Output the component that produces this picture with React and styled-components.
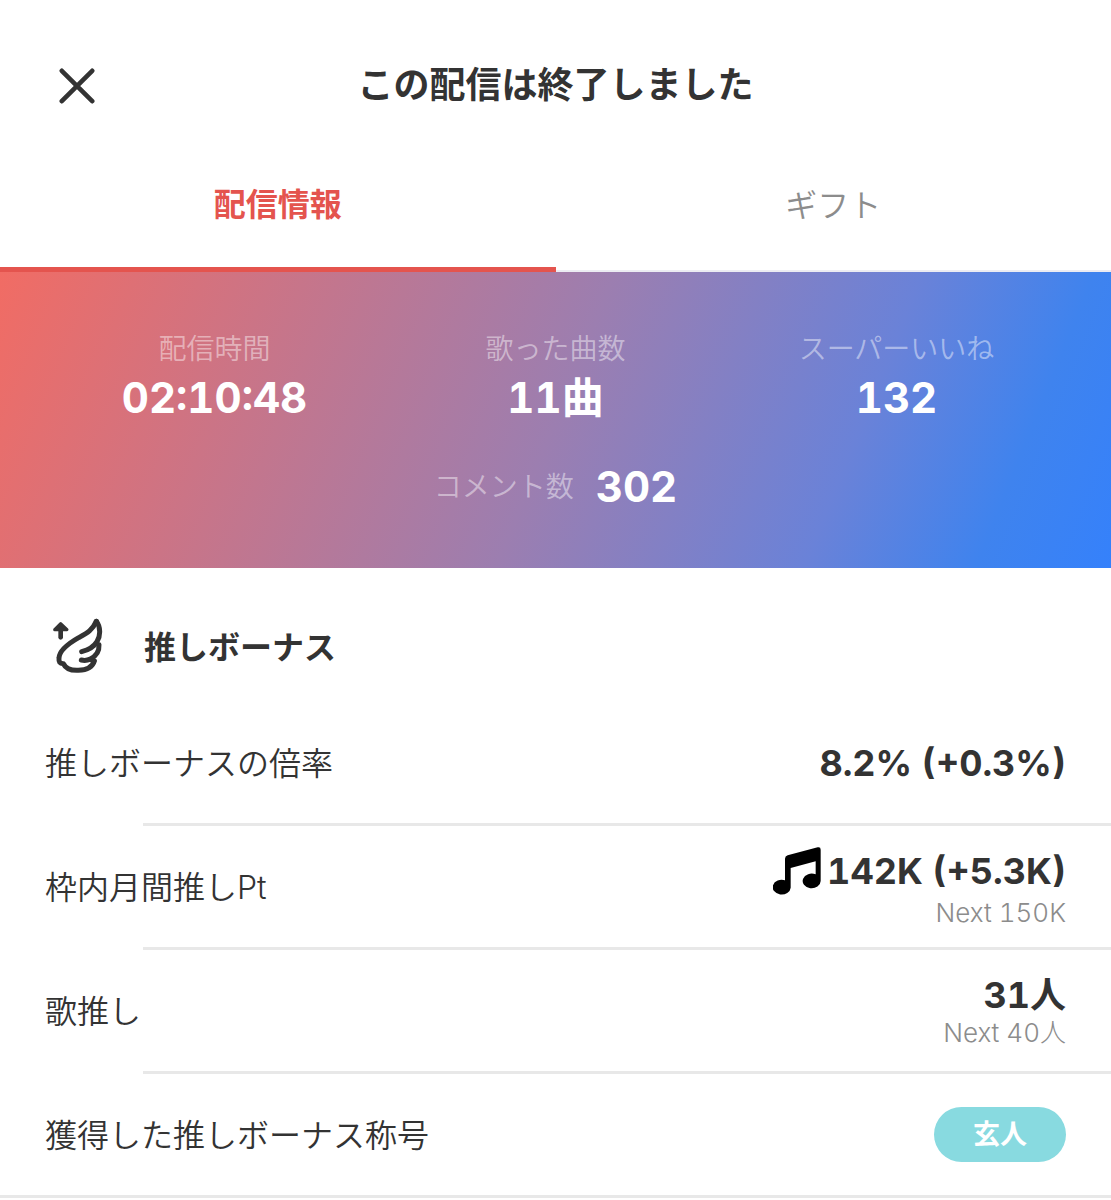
import React, { useState } from 'react'
import styled, { createGlobalStyle } from 'styled-components'

const GlobalStyle = createGlobalStyle`
  * {
    box-sizing: border-box;
  }

  body {
    margin: 0;
    background: #fff;
    color: #333;
    font-family: Inter, 'Noto Sans CJK JP', sans-serif;
    font-variant-numeric: tabular-nums;
  }
`

const Header = styled.header`
  display: grid;
  grid-template-columns: 64px 1fr 64px;
  align-items: center;
  padding: 56px 45px 0;
`

const CloseButton = styled.button`
  display: flex;
  justify-content: center;
  align-items: center;
  height: 60px;
  padding: 0;
  border: 0;
  background: none;
  color: #333;
  cursor: pointer;
`

const Title = styled.h1`
  margin: 0;
  padding-bottom: 2px;
  font-size: 36px;
  line-height: 56px;
  font-weight: 700;
  text-align: center;
`

const Tabs = styled.div`
  display: flex;
  margin-top: 22px;
`

const Tab = styled.button`
  flex: 1;
  height: 134px;
  padding: 4px 0 0;
  border: 0;
  border-bottom: ${({ $active }) => ($active ? '5px solid #e4544e' : '2px solid #ececf2')};
  background: none;
  color: ${({ $active }) => ($active ? '#e4544e' : '#8c8c8c')};
  font-family: inherit;
  font-size: 32px;
  line-height: 48px;
  font-weight: ${({ $active }) => ($active ? 700 : 350)};
  cursor: pointer;
`

const Summary = styled.section`
  padding: 55px 44px 54px;
  background: linear-gradient(112deg, #f16c64, #9c7eb0 50%, #6a82d8 75%, #3f83ee 89%, #3581fb);
  color: #fff;
`

const Stats = styled.div`
  display: grid;
  grid-template-columns: repeat(3, 1fr);
  text-align: center;
`

const Label = styled.div`
  color: rgba(255, 255, 255, 0.45);
  font-size: 28px;
  line-height: 44px;
  font-weight: 350;
`

const Value = styled.div`
  font-size: 42px;
  line-height: 54px;
  font-weight: 700;
`

const Comments = styled.div`
  display: flex;
  justify-content: center;
  align-items: center;
  gap: 22px;
  margin-top: 35px;
`

const SectionHead = styled.div`
  display: flex;
  align-items: center;
  gap: 40px;
  padding: 42px 52px 20px;
`

const SectionTitle = styled.h2`
  margin: 0;
  padding-top: 4px;
  font-size: 32px;
  line-height: 68px;
  font-weight: 700;
`

const List = styled.dl`
  margin: 0;
`

const Row = styled.div`
  display: flex;
  justify-content: space-between;
  align-items: center;
  height: 121px;
  padding: 0 45px;
`

const Name = styled.dt`
  padding-top: 3px;
  font-size: 32px;
  line-height: 48px;
  font-weight: 350;
`

const Detail = styled.dd`
  margin: 0;
  text-align: right;
`

const Amount = styled.div`
  display: flex;
  justify-content: flex-end;
  align-items: center;
  gap: 6px;
  font-size: 36px;
  line-height: 44px;
  font-weight: 700;

  svg {
    margin: 2px 0;
  }
`

const Next = styled.div`
  color: #8c8c8c;
  font-size: 26px;
  line-height: 32px;
  font-weight: 300;
`

const Badge = styled.span`
  display: block;
  padding: 0 39px;
  border-radius: 28px;
  background: #88dae0;
  color: #fff;
  font-size: 27px;
  line-height: 55px;
  font-weight: 700;
`

const Divider = styled.div`
  height: 3px;
  margin-left: ${({ $full }) => ($full ? 0 : '143px')};
  background: #e8e8e8;
`

const CloseIcon = () => (
  <svg width='36' height='36' viewBox='0 0 36 36' fill='none' stroke='currentColor' strokeWidth='4.6' strokeLinecap='round'>
    <path d='M2.8 2.8L33.2 33.2M33.2 2.8L2.8 33.2' />
  </svg>
)

const WingIcon = () => (
  <svg width='52' height='56' viewBox='36 52 156 168' fill='none' stroke='#333' strokeWidth='15' strokeLinecap='round' strokeLinejoin='round'>
    <path d='M62 110V82' strokeWidth='14' />
    <path d='M44 87L62 69L81 87Z' fill='#333' strokeWidth='9' />
    <path d='M169 62C158 88 141 97 116 111C88 127 58 150 57 172C56 184 59 189 70 189C77 204 94 210 115 209C141 208 158 198 163 181' />
    <path d='M169 62C182 79 182 105 171 123C162 138 145 148 125 153' />
    <path d='M177 132C178 150 169 166 151 175C143 179 132 180 124 178' />
    <path d='M151 177L162 181' />
  </svg>
)

const NoteIcon = () => (
  <svg width='48' height='48' viewBox='83 52 144 144' fill='#000'>
    <path d='M119 87Q119 79 127 77L217 53Q226 51 226 60V154A27 22 0 1 1 211 134V95L136 115V174A27 22 0 1 1 119 152Z' />
  </svg>
)

const stats = [
  { label: '配信時間', value: '02:10:48' },
  { label: '歌った曲数', value: '11曲' },
  { label: 'スーパーいいね', value: '132' }
]

const rows = [
  { name: '推しボーナスの倍率', amount: '8.2% (+0.3%)' },
  { name: '枠内月間推しPt', amount: '142K (+5.3K)', next: 'Next 150K', note: true },
  { name: '歌推し', amount: '31人', next: 'Next 40人' },
  { name: '獲得した推しボーナス称号', badge: '玄人' }
]

const tabs = ['配信情報', 'ギフト']

const App = () => {
  const [active, setActive] = useState(0)

  return (
    <>
      <GlobalStyle />
      <Header>
        <CloseButton aria-label='閉じる'>
          <CloseIcon />
        </CloseButton>
        <Title>この配信は終了しました</Title>
      </Header>
      <Tabs role='tablist'>
        {tabs.map((tab, i) => (
          <Tab key={tab} role='tab' aria-selected={active === i} $active={active === i} onClick={() => setActive(i)}>
            {tab}
          </Tab>
        ))}
      </Tabs>
      <Summary>
        <Stats>
          {stats.map(({ label, value }) => (
            <div key={label}>
              <Label>{label}</Label>
              <Value>{value}</Value>
            </div>
          ))}
        </Stats>
        <Comments>
          <Label>コメント数</Label>
          <Value>302</Value>
        </Comments>
      </Summary>
      <SectionHead>
        <WingIcon />
        <SectionTitle>推しボーナス</SectionTitle>
      </SectionHead>
      <List>
        {rows.map(({ name, amount, next, note, badge }, i) => (
          <div key={name}>
            <Row>
              <Name>{name}</Name>
              <Detail>
                {amount && (
                  <Amount>
                    {note && <NoteIcon />}
                    {amount}
                  </Amount>
                )}
                {next && <Next>{next}</Next>}
                {badge && <Badge>{badge}</Badge>}
              </Detail>
            </Row>
            <Divider $full={i === rows.length - 1} />
          </div>
        ))}
      </List>
    </>
  )
}

export default App
